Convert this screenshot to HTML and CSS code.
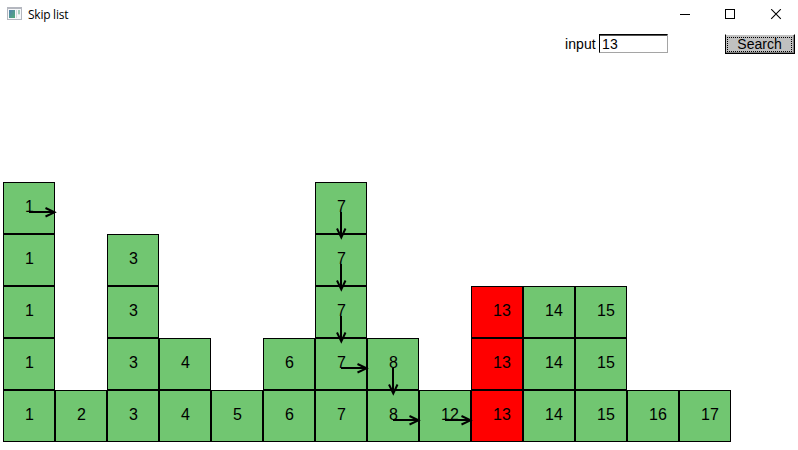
FILE: index.html
```html
<!DOCTYPE html>
<html lang="en">
<head>
<meta charset="utf-8">
<title>Skip list</title>
<link rel="stylesheet" href="styles.css">
</head>
<body>
<header class="titlebar">
  <svg class="app-icon" width="16" height="14" viewBox="0 0 16 14" shape-rendering="crispEdges">
    <defs><linearGradient id="pane" x1="0" y1="0" x2="1" y2="1"><stop offset="0" stop-color="#5180ae"/><stop offset="1" stop-color="#52ad78"/></linearGradient></defs>
    <path fill="#b4b7bf" d="M0 0h15v13H0z"/>
    <path fill="#f7f8fa" d="M1 2h13v10H1z"/>
    <path fill="url(#pane)" d="M2 3h6v8H2z"/>
    <path fill="#d5d8dc" d="M9 3h1v8H9z"/>
    <path fill="#a2ccba" d="M11 3h2v4h-2z"/>
    <path fill="#dce8e6" d="M11 7h2v1h-2z"/>
  </svg>
  <h1 class="title">Skip list</h1>
  <svg class="controls" width="102" height="11" viewBox="0 0 102 11">
    <path d="M0 5.500h10M45.500 .5h9v9h-9z" fill="none" stroke="#000" shape-rendering="crispEdges"/>
    <path d="M91.200 .2l9.600 9.600M100.800 .2l-9.600 9.600" stroke="#000" stroke-width="1.100"/>
  </svg>
</header>
<form class="toolbar">
  <label class="label" for="query">input</label>
  <input class="query" id="query" type="text" value="13">
  <button class="search" type="button"><span class="focus">Search</span></button>
</form>
<main class="list" id="list"></main>
<script src="list.js"></script>
</body>
</html>
```
FILE: styles.css
```css
* { box-sizing: border-box; }
body {
  margin: 0;
  width: 798px;
  height: 450px;
  overflow: hidden;
  background: #fff;
  color: #000;
  font-family: "Liberation Sans", Arial, sans-serif;
  display: flex;
  flex-direction: column;
}
.titlebar {
  height: 30px;
  padding: 0 16px 0 7px;
  display: flex;
  align-items: flex-start;
  flex: none;
}
.app-icon { margin-top: 7px; }
.title {
  margin: 6px 0 0 5px;
  font: 400 12px/17px "Open Sans", "Noto Sans", sans-serif;
  letter-spacing: -0.25px;
}
.controls { margin: 9px 0 0 auto; }
.toolbar {
  height: 30px;
  padding: 4px 3px 0 565px;
  display: flex;
  align-items: flex-start;
  flex: none;
  font-size: 14px;
}
.label { width: 34px; line-height: 20px; letter-spacing: 0.1px; }
.query {
  width: 69px;
  height: 19px;
  margin: 0;
  padding: 0 0 0 2px;
  border: 1px solid;
  border-color: #000 #a5a5a5 #a5a5a5 #000;
  box-shadow: inset 0 1px #555;
  background: #fff;
  color: #000;
  font: 14px/17px "Liberation Sans", Arial, sans-serif;
  letter-spacing: 0.2px;
  outline: none;
}
.search {
  width: 70px;
  height: 20px;
  margin-left: auto;
  padding: 1px;
  border: 1px solid;
  border-color: #fff #000 #000 #fff;
  border-left-color: #000;
  box-shadow: inset -1px -1px #808080;
  background: #c0c0c0;
  color: #000;
  font: 14px/14px "Liberation Sans", Arial, sans-serif;
}
.focus {
  display: block;
  width: 65px;
  height: 15px;
  border: 1px dotted #000;
  line-height: 13px;
}
.list {
  margin-top: auto;
  padding: 0 0 8px 3px;
  display: flex;
  align-items: flex-end;
}
.column { width: 52px; display: flex; flex-direction: column; }
.cell {
  position: relative;
  height: 52px;
  padding-left: 21px;
  border: 1px solid #000;
  background: #71c671;
  font-size: 16px;
  line-height: 47px;
}
.cell.found { background: #f00; }
.arrow {
  position: absolute;
  left: -1px;
  top: -1px;
  z-index: 1;
  overflow: visible;
  fill: none;
  stroke: #000;
  stroke-width: 2;
}
```
FILE: list.js
```js
// Node values with their tower heights.
const nodes = [
  [1, 5], [2, 1], [3, 4], [4, 2], [5, 1], [6, 2], [7, 5],
  [8, 2], [12, 1], [13, 3], [14, 3], [15, 3], [16, 1], [17, 1]
];
// Search path steps, keyed by "value:level".
const steps = {
  '1:5': 'right', '7:5': 'down', '7:4': 'down', '7:3': 'down',
  '7:2': 'right', '8:2': 'down', '8:1': 'right', '12:1': 'right'
};
const paths = {
  right: 'M26 30H51M42.500 26L51.500 30.300L42.500 34.500',
  down: 'M26 30V55M22 46.500L26.300 55.500L30.500 46.500'
};
const target = 13;

document.getElementById('list').innerHTML = nodes.map(([value, height]) => {
  let cells = '';
  for (let level = height; level > 0; level--) {
    const step = steps[value + ':' + level];
    const arrow = step
      ? `<svg class="arrow" width="52" height="52"><path d="${paths[step]}"/></svg>`
      : '';
    cells += `<div class="cell${value === target ? ' found' : ''}">${value}${arrow}</div>`;
  }
  return `<div class="column">${cells}</div>`;
}).join('');
```
